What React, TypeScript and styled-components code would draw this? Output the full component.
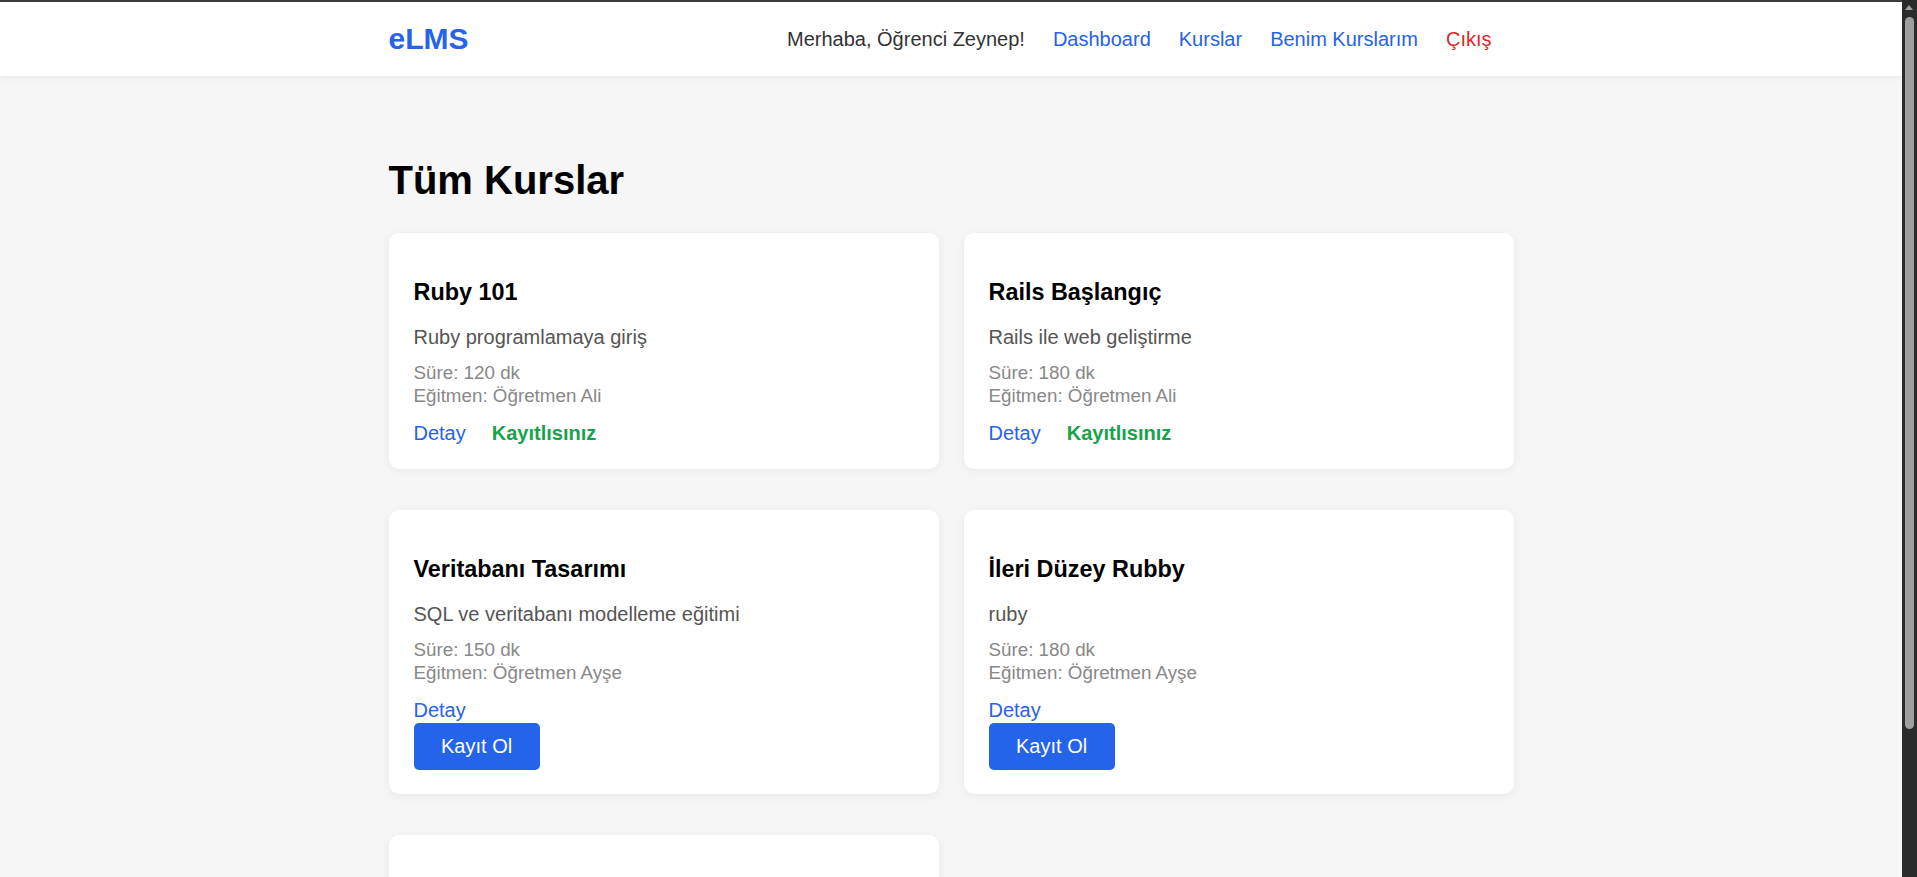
import styled, { createGlobalStyle } from 'styled-components';

interface Course {
  id: number;
  title: string;
  description: string;
  duration: number;
  instructor: string;
  enrolled: boolean;
}

const COURSES: Course[] = [
  { id: 1, title: 'Ruby 101', description: 'Ruby programlamaya giriş', duration: 120, instructor: 'Öğretmen Ali', enrolled: true },
  { id: 2, title: 'Rails Başlangıç', description: 'Rails ile web geliştirme', duration: 180, instructor: 'Öğretmen Ali', enrolled: true },
  { id: 3, title: 'Veritabanı Tasarımı', description: 'SQL ve veritabanı modelleme eğitimi', duration: 150, instructor: 'Öğretmen Ayşe', enrolled: false },
  { id: 4, title: 'İleri Düzey Rubby', description: 'ruby', duration: 180, instructor: 'Öğretmen Ayşe', enrolled: false },
  { id: 5, title: 'JavaScript Temelleri', description: 'Modern JavaScript ile tanışın', duration: 90, instructor: 'Öğretmen Ali', enrolled: false },
];

const GlobalStyle = createGlobalStyle`
  body {
    margin: 0;
    padding-right: 15px;
    background: #f6f6f6;
    font-family: 'Liberation Sans', Arial, sans-serif;
    color: #000;
  }
`;

const App = () => {
  return (
    <>
      <GlobalStyle />
      <Navbar>
        <NavInner>
          <Logo href='#'>eLMS</Logo>
          <Nav>
            <Greeting>Merhaba, Öğrenci Zeynep!</Greeting>
            <NavLink href='#'>Dashboard</NavLink>
            <NavLink href='#'>Kurslar</NavLink>
            <NavLink href='#'>Benim Kurslarım</NavLink>
            <NavLink href='#' $danger>
              Çıkış
            </NavLink>
          </Nav>
        </NavInner>
      </Navbar>

      <Main>
        <PageTitle>Tüm Kurslar</PageTitle>
        <Grid>
          {COURSES.map((course) => (
            <Card key={course.id}>
              <CourseTitle>{course.title}</CourseTitle>
              <Description>{course.description}</Description>
              <Meta>
                Süre: {course.duration} dk
                <br />
                Eğitmen: {course.instructor}
              </Meta>
              <Actions $stacked={!course.enrolled}>
                <DetailLink href='#'>Detay</DetailLink>
                {course.enrolled ? (
                  <Enrolled>Kayıtlısınız</Enrolled>
                ) : (
                  <form onSubmit={(e) => e.preventDefault()}>
                    <EnrollButton type='submit'>Kayıt Ol</EnrollButton>
                  </form>
                )}
              </Actions>
            </Card>
          ))}
        </Grid>
      </Main>

      {/* window scrollbar as it appears in the capture */}
      <ScrollTrack>
        <ScrollArrow />
        <ScrollThumb />
      </ScrollTrack>
    </>
  );
};

const Navbar = styled.header`
  background: #fff;
  border-top: 2px solid #3c3c3c;
  box-shadow: 0 2px 6px rgba(0, 0, 0, 0.05);
`;

const NavInner = styled.div`
  max-width: 1125px;
  height: 74px;
  margin: 0 auto;
  display: flex;
  align-items: center;
  justify-content: space-between;
`;

const Logo = styled.a`
  font-size: 30px;
  font-weight: 700;
  color: #2563eb;
  text-decoration: none;
`;

const Nav = styled.nav`
  display: flex;
  align-items: center;
  gap: 28px;
  padding-right: 22px;
  font-size: 20px;
`;

const Greeting = styled.span`
  color: #333;
`;

const NavLink = styled.a<{ $danger?: boolean }>`
  color: ${({ $danger }) => ($danger ? '#dc2626' : '#2563eb')};
  text-decoration: none;
`;

const Main = styled.main`
  max-width: 1125px;
  margin: 0 auto;
  padding: 81px 0 50px;
`;

const PageTitle = styled.h1`
  margin: 0 0 30px;
  font-size: 40px;
  line-height: 46px;
  font-weight: 700;
`;

const Grid = styled.div`
  display: grid;
  grid-template-columns: repeat(2, 1fr);
  column-gap: 25px;
  row-gap: 41px;
`;

const Card = styled.div`
  background: #fff;
  border-radius: 10px;
  padding: 25px 25px 24px;
  box-shadow: 0 2px 10px rgba(0, 0, 0, 0.06);
`;

const CourseTitle = styled.h3`
  margin: 21px 0 20px;
  font-size: 23.4px;
  line-height: 27px;
  font-weight: 700;
`;

const Description = styled.p`
  margin: 0 0 12px;
  font-size: 20px;
  line-height: 23px;
  color: #555;
`;

const Meta = styled.div`
  margin-bottom: 14px;
  font-size: 18.8px;
  line-height: 23.4px;
  color: #888;
`;

const Actions = styled.div<{ $stacked: boolean }>`
  display: flex;
  flex-direction: ${({ $stacked }) => ($stacked ? 'column' : 'row')};
  align-items: flex-start;
  gap: ${({ $stacked }) => ($stacked ? '1px' : '26px')};
  font-size: 20px;
  line-height: 23px;
`;

const DetailLink = styled.a`
  color: #2563eb;
  text-decoration: none;
`;

const Enrolled = styled.span`
  color: #16a34a;
  font-weight: 700;
`;

const EnrollButton = styled.button`
  padding: 12.5px 27.5px;
  border: none;
  border-radius: 5px;
  background: #2563eb;
  color: #fff;
  font-family: inherit;
  font-size: 20px;
  line-height: 22.5px;
  cursor: pointer;
`;

const ScrollTrack = styled.div`
  position: fixed;
  top: 0;
  right: 0;
  bottom: 0;
  width: 15px;
  background: #2b2b2b;
`;

const ScrollArrow = styled.div`
  position: absolute;
  top: 5px;
  left: 3px;
  border-left: 4.5px solid transparent;
  border-right: 4.5px solid transparent;
  border-bottom: 5px solid #9f9f9f;
`;

const ScrollThumb = styled.div`
  position: absolute;
  top: 17px;
  left: 3px;
  width: 9px;
  height: 712px;
  border-radius: 5px;
  background: #9f9f9f;
`;

export default App;
